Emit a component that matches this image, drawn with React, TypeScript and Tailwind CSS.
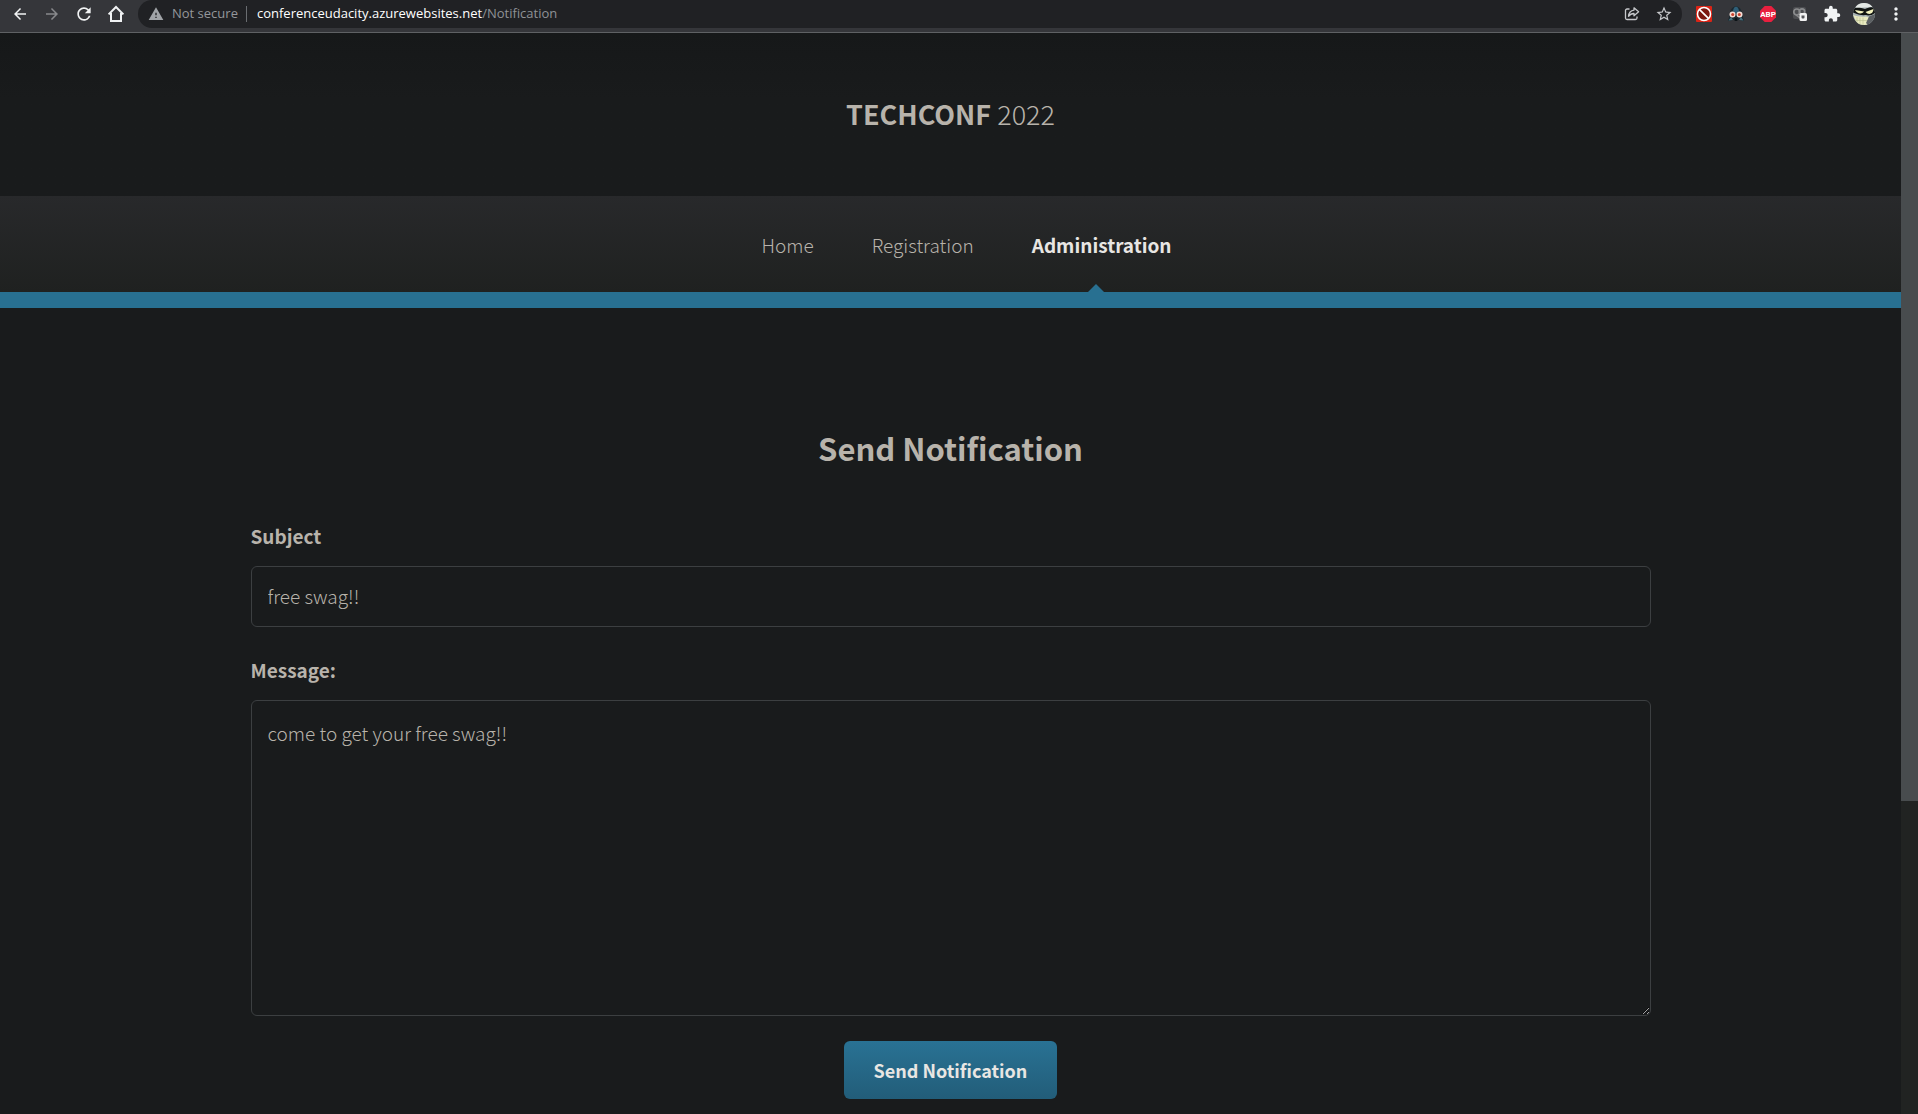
import type { ReactNode } from "react";
import {
  MdArrowBack,
  MdArrowForward,
  MdExtension,
  MdMoreVert,
  MdRefresh,
  MdStarBorder,
  MdWarning,
} from "react-icons/md";

function BarButton({ label, children }: { label: string; children: ReactNode }) {
  return (
    <button type="button" aria-label={label} className="flex h-7 w-8 items-center justify-center">
      {children}
    </button>
  );
}

function HomeIcon() {
  return (
    <svg viewBox="0 0 18 18" className="size-[18px]" fill="none" stroke="currentColor" strokeWidth="2">
      <path d="M1.6 9.4 9 2l7.4 7.4M4 8v8h10V8" />
    </svg>
  );
}

function ShareIcon() {
  return (
    <svg viewBox="0 0 16 16" className="size-4" fill="none" stroke="currentColor" strokeWidth="1.3" strokeLinejoin="round">
      <path d="M5.5 3H3a1.5 1.5 0 0 0-1.5 1.5V12A1.5 1.5 0 0 0 3 13.500h8.500A1.500 1.500 0 0 0 13 12v-1.500" />
      <path d="M10 1.800 14.600 5.800 10 9.800V7.500C7.300 7.500 5.700 8.500 4.500 10.300 4.800 7 6.700 4.500 10 4.100Z" />
    </svg>
  );
}

function BlockerIcon() {
  return (
    <svg viewBox="0 0 16 16" className="size-4">
      <rect width="16" height="16" rx="1" fill="#dc2416" />
      <circle cx="8" cy="8" r="6.500" fill="#7c1710" stroke="#fff" strokeWidth="1.500" />
      <path d="M3.600 3.600l8.800 8.800" stroke="#fff" strokeWidth="1.700" />
    </svg>
  );
}

function MaskIcon() {
  return (
    <svg viewBox="0 0 16 16" className="size-4">
      <path d="M0 15 2 7C2.500 3 5 0.500 8 0.500S13.500 3 14 7l2 8-5-1H5Z" fill="#1b2930" />
      <path d="M5 5C5.500 2 6.500 0.800 8 0.800S10.500 2 11 5L8 8Z" fill="#2f5f78" />
      <path d="M0.500 14.500 3 11l2 3M15.500 14.500 13 11l-2 3" fill="#46707f" />
      <circle cx="4.500" cy="8.500" r="3" fill="#f7ded6" />
      <circle cx="11.500" cy="8.500" r="3" fill="#f7ded6" />
      <circle cx="4.700" cy="8.500" r="1.500" fill="#c9402c" />
      <circle cx="11.300" cy="8.500" r="1.500" fill="#c9402c" />
      <path d="M6.500 15 7 12h2l.5 3Z" fill="#0c1317" />
    </svg>
  );
}

function AdblockIcon() {
  return (
    <svg viewBox="0 0 16 16" className="size-4">
      <path d="M4.700 0h6.600L16 4.700v6.600L11.300 16H4.700L0 11.300V4.700Z" fill="#e8203f" />
      <text x="8" y="11" textAnchor="middle" fill="#fff" className="font-['Roboto',sans-serif] text-[8px] font-bold">
        ABP
      </text>
    </svg>
  );
}

function CookieIcon() {
  return (
    <svg viewBox="0 0 16 16" className="size-4">
      <rect x="1" y="1" width="13" height="12" rx="2" fill="#4c4d50" />
      <circle cx="4.800" cy="6" r="3" fill="none" stroke="#8a8b8d" strokeWidth="1.700" />
      <circle cx="10" cy="5.500" r="2.700" fill="none" stroke="#8a8b8d" strokeWidth="1.700" />
      <path d="M4 9l4 3" stroke="#8a8b8d" strokeWidth="1.500" />
      <rect x="7.500" y="7" width="7.500" height="8" rx="1.500" fill="#f1f1f1" />
      <path d="M9.500 9.500h3v2a1 1 0 0 1-1 1h-1a1 1 0 0 1-1-1Z" fill="#55565a" />
    </svg>
  );
}

function AvatarIcon() {
  return (
    <svg viewBox="0 0 22 22" className="size-[22px]">
      <defs>
        <clipPath id="avatar-clip">
          <circle cx="11" cy="11" r="11" />
        </clipPath>
      </defs>
      <g clipPath="url(#avatar-clip)">
        <rect width="22" height="22" fill="#a9b3b4" />
        <path d="M3 0h16v4L3 5Z" fill="#e3e7e4" />
        <path d="M0 6C3 4 8 5 12 6c4-2 8-2 10-1v5c-3 2.500-7 3-9 2-4 .5-9-.5-13-2.500Z" fill="#111412" />
        <path d="M2 7 11 8.500c-2 3-7 2.500-9-1.500ZM12.500 9 20.500 6c0 5-5 6.500-8 3Z" fill="#f3f2bd" />
        <path d="M0 12c4 1.500 9 2 13 1.500l3 1-2 7.500H5Z" fill="#e9eabf" />
        <path d="M4 14v6M7 14.500V22M10 14.500V22M2 17.500h12" stroke="#b9bd8f" strokeWidth=".6" />
        <path d="M16 13.500 22 11v8l-7 3-2-2Z" fill="#5c6063" />
      </g>
    </svg>
  );
}

function BrowserBar() {
  return (
    <div className="flex border-b border-[#5f6164] bg-[#35363a] pr-1.5 pb-1 pl-1 font-['Open_Sans',sans-serif] text-[13px] text-[#f1f3f4]">
      <BarButton label="Back"><MdArrowBack className="size-[18px]" /></BarButton>
      <BarButton label="Forward"><MdArrowForward className="size-[18px] text-[#88898c]" /></BarButton>
      <BarButton label="Reload"><MdRefresh className="size-5" /></BarButton>
      <BarButton label="Home page"><HomeIcon /></BarButton>
      <div className="mx-1.5 flex h-7 grow items-center rounded-full bg-[#202124] pl-2.5 pr-0.5">
        <MdWarning className="size-4 text-[#a0a3a7]" />
        <span className="ml-2 text-[#94979b]">Not secure</span>
        <span className="mr-2.5 ml-2 h-4 w-px bg-[#6a6d71]" />
        <a href="#" className="text-white">
          conferenceudacity.azurewebsites.net<span className="text-[#8f9296]">/Notification</span>
        </a>
        <div className="ml-auto flex text-[#c6c8cb]">
          <BarButton label="Share this page"><ShareIcon /></BarButton>
          <BarButton label="Bookmark this page"><MdStarBorder className="size-[18px]" /></BarButton>
        </div>
      </div>
      <BarButton label="Blocker"><BlockerIcon /></BarButton>
      <BarButton label="Privacy mask"><MaskIcon /></BarButton>
      <BarButton label="Adblock Plus"><AdblockIcon /></BarButton>
      <BarButton label="Cookie manager"><CookieIcon /></BarButton>
      <BarButton label="Extensions"><MdExtension className="size-[18px]" /></BarButton>
      <BarButton label="Profile"><AvatarIcon /></BarButton>
      <BarButton label="Menu"><MdMoreVert className="size-5" /></BarButton>
    </div>
  );
}

function Header() {
  return (
    <header>
      <div className="bg-linear-to-b from-[#161819] to-[#191b1c] to-40% pt-[61px] pb-[62px] text-center">
        <h1 className="text-[27px] leading-10">
          <a href="#">
            <span className="font-bold">TECHCONF</span> <span className="font-light">2022</span>
          </a>
        </h1>
      </div>
      <nav className="border-b-16 border-[#287091] bg-linear-to-b from-[#28292b] to-[#1f2120]">
        <ul className="flex h-24 items-stretch justify-center gap-[58px] pl-8 text-[19px]">
          <li className="flex items-center pt-0.5"><a href="#" className="font-light">Home</a></li>
          <li className="flex items-center pt-0.5"><a href="#" className="font-light">Registration</a></li>
          <li className="relative flex items-center pt-0.5">
            <a href="#" aria-current="page" className="font-bold text-[#e8e6e3]">Administration</a>
            <span className="absolute bottom-0 left-1/2 -ml-3.5 border-x-8 border-b-8 border-x-transparent border-b-[#287091]" />
          </li>
        </ul>
      </nav>
    </header>
  );
}

function NotificationForm() {
  return (
    <main className="mx-auto w-full max-w-[1400px] pt-[120px] pb-4">
      <h2 className="text-center text-[31px] leading-10 font-bold">Send Notification</h2>
      <form className="flex flex-col pt-[50px]" onSubmit={(e) => e.preventDefault()}>
        <label htmlFor="subject" className="mb-3 text-[19px] leading-9 font-bold">Subject</label>
        <input
          id="subject"
          type="text"
          defaultValue="free swag!!"
          className="h-[61px] rounded-md border border-[#3c3f41] bg-transparent px-4 pb-0.5 text-[19px] font-light outline-none"
        />
        <label htmlFor="message" className="mt-[25px] mb-3 text-[19px] leading-9 font-bold">Message:</label>
        <textarea
          id="message"
          defaultValue="come to get your free swag!!"
          className="h-[316px] rounded-md border border-[#3c3f41] bg-transparent px-4 py-3.5 text-[19px] leading-9 font-light outline-none [color-scheme:dark]"
        />
        <button
          type="submit"
          className="mt-[25px] h-[58px] self-center rounded-md bg-linear-to-b from-[#297294] to-[#225d79] px-[30px] text-lg font-bold text-[#e8e6e3]"
        >
          Send Notification
        </button>
      </form>
    </main>
  );
}

export default function App() {
  return (
    <div className="flex min-h-screen flex-col bg-[#191b1c]">
      <BrowserBar />
      <div className="flex grow">
        <div className="grow font-['Noto_Sans_CJK_SC','Noto_Sans',sans-serif] text-[#b8b3ab]">
          <Header />
          <NotificationForm />
        </div>
        <div className="flex w-[17px] flex-col bg-[#212322]">
          <div className="grow-[71] basis-0 bg-[#484c4e]" />
          <div className="grow-[29] basis-0" />
        </div>
      </div>
    </div>
  );
}
